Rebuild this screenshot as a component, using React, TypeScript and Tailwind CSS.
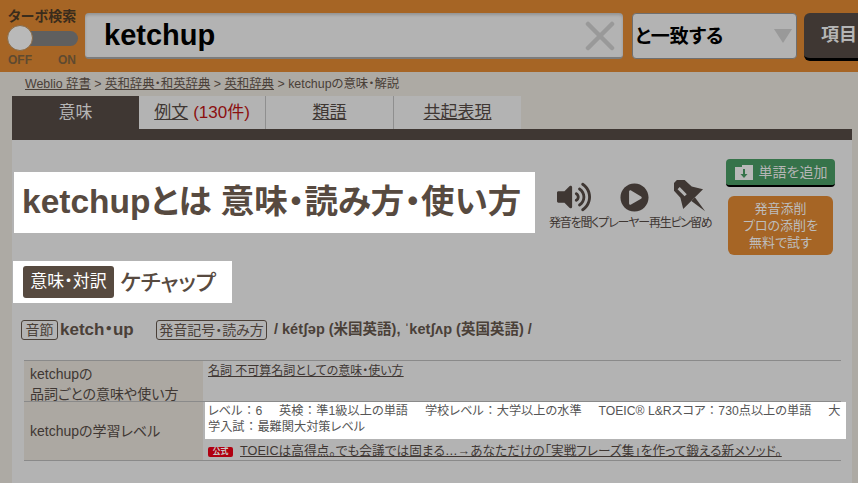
import { FaPlayCircle, FaVolumeUp } from "react-icons/fa";

const font = "font-['Liberation_Sans','Noto_Sans_CJK_JP',sans-serif] [font-feature-settings:'palt']";

function Header() {
  return (
    <div className="flex h-[72px] bg-[#a66525] overflow-hidden">
      {/* turbo search toggle */}
      <div className="w-[85px] shrink-0 pl-[8px] pt-[8px] flex flex-col">
        <div className="text-[14px] leading-[16px] font-bold text-[#3a2c1c] whitespace-nowrap">ターボ検索</div>
        <div className="h-[26px] mt-[1px] flex items-center relative w-[70px]">
          <div className="h-[15px] w-[70px] rounded-full bg-[#5f5f5f]" />
          <div className="absolute left-[-1px] top-0 w-[26px] h-[26px] rounded-full bg-[#b9b9b9] border border-[#8a6a45]" />
        </div>
        <div className="flex justify-between w-[68px] text-[12px] leading-[13px] font-bold text-[#5f4a30] mt-[3px]">
          <span>OFF</span>
          <span>ON</span>
        </div>
      </div>
      {/* search box */}
      <div className="mt-[13px] h-[46px] w-[538px] shrink-0 rounded-[4px] bg-[#b3b3b3] border-b-2 border-[#7c7c7c] shadow-[inset_0_2px_3px_rgba(0,0,0,0.18)] flex items-center justify-between pl-[19px] pr-[8px]">
        <span className="text-[29px] font-bold text-black leading-none">ketchup</span>
        <svg width="30" height="30" viewBox="0 0 30 30" className="mt-[1px]">
          <path d="M3 3L27 27M27 3L3 27" stroke="#999" strokeWidth="4.5" strokeLinecap="round" />
        </svg>
      </div>
      {/* match mode */}
      <div className="ml-[9px] mt-[13px] h-[46px] w-[165px] shrink-0 rounded-[4px] bg-[#b3b3b3] border border-[#6f6f6f] flex items-center justify-between pl-[2px] pr-[4px]">
        <span className="text-[19px] font-bold text-black leading-none">と一致する</span>
        <span className="w-0 h-0 border-x-[9px] border-x-transparent border-t-[14px] border-t-[#999]" />
      </div>
      <div className="ml-[7px] mt-[13px] h-[48px] w-[80px] shrink-0 rounded-[6px] bg-[#3f3733] border-b-[3px] border-black pl-[17px] flex items-center">
        <span className="text-[18px] font-bold text-[#b5b5b5] whitespace-nowrap">項目</span>
      </div>
    </div>
  );
}

function Tabs() {
  const cell = "h-[33px] flex items-center justify-center text-[17px] text-[#3f3733] bg-[#b3b3b3]";
  return (
    <div className="flex ml-[12px] mt-[2px]">
      <div className="w-[127px] h-[33px] flex items-center justify-center text-[17px] text-[#b5b5b5] bg-[#3f3733]">意味</div>
      <div className={`${cell} w-[127px] border-r border-[#8f8f8f]`}>
        <span className="underline">例文</span>
        <span className="ml-[5px] text-[#8c0f0f]">(130件)</span>
      </div>
      <div className={`${cell} w-[128px] border-r border-[#8f8f8f] underline`}>類語</div>
      <div className={`${cell} w-[127px] underline`}>共起表現</div>
    </div>
  );
}

function IconButton({ label, children }: { label: string; children: React.ReactNode }) {
  return (
    <div className="flex flex-col items-center">
      <div className="h-[34px] flex items-center justify-center text-[#3f3733]">{children}</div>
      <div className="text-[12px] leading-[16px] mt-[1px] text-[#3f3733] whitespace-nowrap tracking-[-1.2px]">{label}</div>
    </div>
  );
}

function PinIcon() {
  return (
    <svg width="34" height="34" viewBox="0 0 34 34">
      <g transform="rotate(-45 17 17)" fill="#3f3733">
        <path d="M7 -5H27V0H24.5L25 10L31 20H3L9 10L9.5 0H7Z" />
        <path d="M14.5 20H19.5L17 37Z" />
        <rect x="13" y="2" width="3" height="10" fill="#b3b3b3" />
      </g>
    </svg>
  );
}

function TitleRow() {
  return (
    <div className="flex items-start">
      <div className="ml-[2px] mt-[32px] w-[521px] h-[61px] shrink-0 bg-white flex items-center pl-[8px]">
        <h1 className="text-[33.5px] font-bold text-[#574a40] whitespace-nowrap">ketchupとは 意味・読み方・使い方</h1>
      </div>
      <div className="ml-[14px] mt-[40px] w-[161px] shrink-0 flex justify-between">
        <IconButton label="発音を聞く">
          <FaVolumeUp size={34} />
        </IconButton>
        <IconButton label="プレーヤー再生">
          <FaPlayCircle size={29} />
        </IconButton>
        <IconButton label="ピン留め">
          <PinIcon />
        </IconButton>
      </div>
      <div className="ml-[16px] mt-[19px] w-[109px] shrink-0 flex flex-col items-center">
        <div className="w-[109px] h-[28px] rounded-[4px] bg-[#36734a] border-b-2 border-black flex items-center justify-center gap-[5px]">
          <svg width="20" height="17" viewBox="0 0 20 17">
            <path d="M1 3H8V1H19V16H1Z" fill="#b9b9b9" />
            <path d="M9 5H11V10H13.5L10 14L6.5 10H9Z" fill="#36734a" />
          </svg>
          <span className="text-[14px] text-[#b5b5b5]">単語を追加</span>
        </div>
        <div className="mt-[9px] w-[105px] h-[59px] rounded-[6px] bg-[#a66525] text-[#bdbdbd] text-[13px] leading-[17px] flex items-center justify-center text-center">
          <span>
            発音添削
            <br />
            プロの添削を
            <br />
            無料で試す
          </span>
        </div>
      </div>
    </div>
  );
}

function InfoTable() {
  return (
    <div className="ml-[12px] w-[817px] mt-[19px] border-y border-[#8a8a8a] text-[#3f3733]">
      <div className="flex h-[41px] border-b border-[#8a8a8a]">
        <div className="w-[179px] shrink-0 bg-[#aca8a2] pl-[6px] pt-[3px] text-[14px] leading-[20px]">
          ketchupの
          <br />
          品詞ごとの意味や使い方
        </div>
        <div className="pl-[5px] pt-[1px] text-[12px] leading-[18px] underline">名詞 不可算名詞としての意味・使い方</div>
      </div>
      <div className="flex h-[58px]">
        <div className="w-[179px] shrink-0 bg-[#aca8a2] pl-[6px] flex items-center text-[14px]">ketchupの学習レベル</div>
        <div className="min-w-0 flex-1">
          <div className="ml-[2px] w-[641px] h-[37px] bg-white pl-[3px] pr-[2px] pt-[1px] text-[12.2px] leading-[16px] text-[#555]">
            レベル ： 6&nbsp;&nbsp;&nbsp;&nbsp;&nbsp;英検 ： 準1級以上の単語&nbsp;&nbsp;&nbsp;&nbsp;&nbsp;学校レベル ： 大学以上の水準&nbsp;&nbsp;&nbsp;&nbsp;&nbsp;TOEIC® L&amp;Rスコア ： 730点以上の単語&nbsp;&nbsp;&nbsp;&nbsp;&nbsp;大学入試 ： 最難関大対策レベル
          </div>
          <div className="pl-[5px] mt-[5px] flex items-center whitespace-nowrap">
            <span className="w-[25px] h-[10px] rounded-[2px] bg-[#b00010] text-[8px] leading-[10px] font-bold text-[#c9c9c9] text-center">公式</span>
            <span className="ml-[7px] text-[12.7px] leading-[15px] underline">TOEICは高得点。でも会議では固まる…→あなただけの「実戦フレーズ集」を作って鍛える新メソッド。</span>
          </div>
        </div>
      </div>
    </div>
  );
}

export default function App() {
  return (
    <div className={`${font} w-[858px] h-[483px] overflow-hidden bg-[#adaaa4]`}>
      <Header />
      <div className="ml-[25px] mt-[3px] text-[12.4px] leading-[18px] text-[#4a4038] whitespace-nowrap">
        <span className="underline">Weblio 辞書</span> &gt; <span className="underline">英和辞典・和英辞典</span> &gt; <span className="underline">英和辞典</span> &gt; ketchupの意味・解説
      </div>
      <div className="h-[1px]" />
      <Tabs />
      <div className="ml-[12px] w-[840px] h-[11px] bg-[#3f3733]" />
      <div className="ml-[12px] w-[840px] h-[343px] bg-[#b3b3b3] overflow-hidden">
        <TitleRow />
        <div className="ml-[1px] mt-[6px] w-[219px] h-[42px] bg-white flex items-center pl-[10px]">
          <span className="h-[32px] w-[91px] rounded-[3px] bg-[#574a40] text-white text-[17px] flex items-center justify-center">意味・対訳</span>
          <span className="ml-[6px] text-[22px] font-medium text-[#574a40] whitespace-nowrap">ケチャップ</span>
        </div>
        <div className="ml-[9px] mt-[16px] h-[22px] flex items-center whitespace-nowrap text-[#4a4038]">
          <span className="h-[20px] w-[37px] rounded-[3px] border border-[#4a4038] text-[14px] flex items-center justify-center">音節</span>
          <span className="ml-[2px] w-[96px] text-[17px] font-bold">ketch・up</span>
          <span className="h-[20px] w-[111px] rounded-[3px] border border-[#4a4038] text-[14px] flex items-center justify-center">発音記号・読み方</span>
          <span className="ml-[7px] text-[14.5px] font-bold">/ kétʃəp (米国英語), ˈketʃʌp (英国英語) /</span>
        </div>
        <InfoTable />
      </div>
    </div>
  );
}
